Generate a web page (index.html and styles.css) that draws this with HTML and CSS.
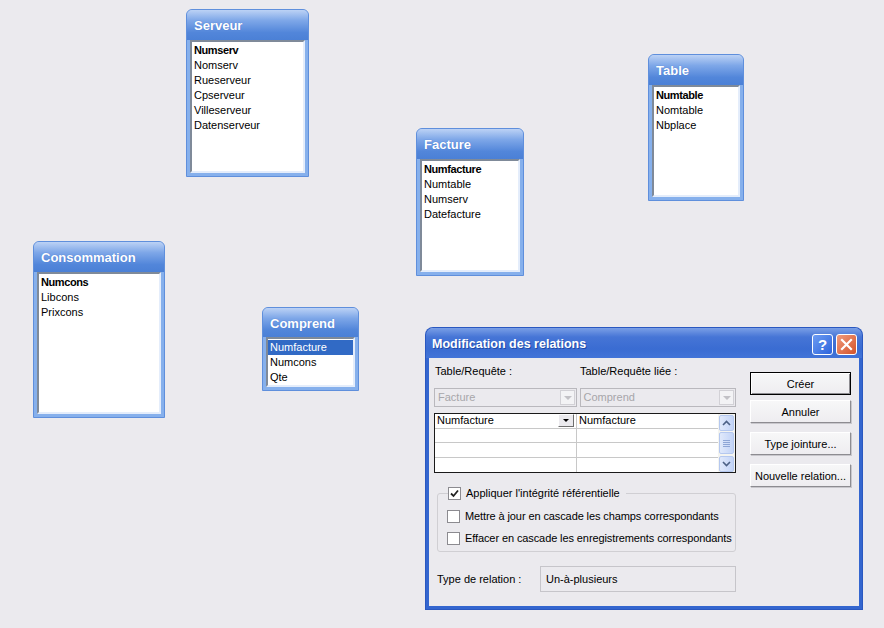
FILE: index.html
```html
<!DOCTYPE html>
<html lang="fr">
<head>
    <meta charset="UTF-8">
    <title>Relations</title>
    <link rel="stylesheet" href="styles.css">
</head>
<body>
    <div class="canvas">

        <div class="tbl tbl-serveur">
            <div class="tbl-title">Serveur</div>
            <ul class="tbl-list">
                <li class="key">Numserv</li>
                <li>Nomserv</li>
                <li>Rueserveur</li>
                <li>Cpserveur</li>
                <li>Villeserveur</li>
                <li>Datenserveur</li>
            </ul>
        </div>

        <div class="tbl tbl-table">
            <div class="tbl-title">Table</div>
            <ul class="tbl-list">
                <li class="key">Numtable</li>
                <li>Nomtable</li>
                <li>Nbplace</li>
            </ul>
        </div>

        <div class="tbl tbl-facture">
            <div class="tbl-title">Facture</div>
            <ul class="tbl-list">
                <li class="key">Numfacture</li>
                <li>Numtable</li>
                <li>Numserv</li>
                <li>Datefacture</li>
            </ul>
        </div>

        <div class="tbl tbl-conso">
            <div class="tbl-title">Consommation</div>
            <ul class="tbl-list">
                <li class="key">Numcons</li>
                <li>Libcons</li>
                <li>Prixcons</li>
            </ul>
        </div>

        <div class="tbl tbl-comprend">
            <div class="tbl-title">Comprend</div>
            <ul class="tbl-list">
                <li class="selected">Numfacture</li>
                <li>Numcons</li>
                <li>Qte</li>
            </ul>
        </div>

        <div class="dialog">
            <div class="dlg-title">
                <span class="dlg-caption">Modification des relations</span>
                <span class="cap-btn help">?</span>
                <span class="cap-btn close">
                    <svg width="13" height="13" viewBox="0 0 13 13"><path d="M2 2 L11 11 M11 2 L2 11" stroke="#fff" stroke-width="2.2" stroke-linecap="square"/></svg>
                </span>
            </div>
            <div class="dlg-body">
                <div class="dlg-main">
                    <div class="labels">
                        <span>Table/Requête :</span>
                        <span>Table/Requête liée :</span>
                    </div>
                    <div class="combos">
                        <div class="combo combo-left">Facture<span class="drop"><i></i></span></div>
                        <div class="combo combo-right">Comprend<span class="drop"><i></i></span></div>
                    </div>
                    <div class="grid">
                        <div class="grid-cells">
                            <div class="row">
                                <div class="cell cell-edit">Numfacture<span class="mini-drop"><i></i></span></div>
                                <div class="cell">Numfacture</div>
                            </div>
                            <div class="row"><div class="cell"></div><div class="cell"></div></div>
                            <div class="row"><div class="cell"></div><div class="cell"></div></div>
                            <div class="row"><div class="cell"></div><div class="cell"></div></div>
                        </div>
                        <div class="vscroll">
                            <span class="sb-btn">
                                <svg width="9" height="6" viewBox="0 0 9 6"><path d="M1 5 L4.5 1.5 L8 5" fill="none" stroke="#4d6185" stroke-width="1.6"/></svg>
                            </span>
                            <span class="sb-thumb"><i></i><i></i><i></i><i></i></span>
                            <span class="sb-btn">
                                <svg width="9" height="6" viewBox="0 0 9 6"><path d="M1 1 L4.5 4.5 L8 1" fill="none" stroke="#4d6185" stroke-width="1.6"/></svg>
                            </span>
                        </div>
                    </div>

                    <fieldset class="group">
                        <legend><span class="check checked"><svg width="9" height="9" viewBox="0 0 9 9"><path d="M1 4.5 L3.5 7 L8 1.5" fill="none" stroke="#222" stroke-width="1.8"/></svg></span>Appliquer l'intégrité référentielle</legend>
                        <label class="opt"><span class="check"></span>Mettre à jour en cascade les champs correspondants</label>
                        <label class="opt"><span class="check"></span>Effacer en cascade les enregistrements correspondants</label>
                    </fieldset>

                    <div class="reltype">
                        <span>Type de relation :</span>
                        <div class="reltype-box">Un-à-plusieurs</div>
                    </div>
                </div>

                <div class="dlg-buttons">
                    <button class="btn btn-default">Créer</button>
                    <button class="btn">Annuler</button>
                    <button class="btn btn-gap">Type jointure...</button>
                    <button class="btn btn-gap">Nouvelle relation...</button>
                </div>
            </div>
        </div>

    </div>
</body>
</html>
```

FILE: styles.css
```css
* {
    box-sizing: border-box;
}

body {
    margin: 0;
    background-color: #ebeaee;
    font-family: "Liberation Sans", Arial, sans-serif;
    font-size: 11px;
    color: #000;
}

.canvas {
    position: relative;
    width: 884px;
    height: 628px;
    overflow: hidden;
}

/* table windows */
.tbl {
    position: absolute;
    display: flex;
    flex-direction: column;
    background: #86b0ec;
    border: 1px solid #5f8fdc;
    border-radius: 6px 6px 0 0;
    padding: 0 3px 3px;
}

.tbl-title {
    height: 30px;
    margin: 0 -3px;
    padding: 3px 0 0 7px;
    line-height: 26px;
    color: #fff;
    font-weight: bold;
    font-size: 13px;
    border-radius: 5px 5px 0 0;
    background: linear-gradient(#bcd2f5, #7ea7e8 35%, #5286da 75%, #4b80d6);
    text-shadow: 0 0 1px #3c6ec8;
}

.tbl-list {
    flex: 1;
    list-style: none;
    margin: 0;
    padding: 1px 0 0;
    background: #fff;
    border: 2px solid;
    border-color: #7f8a99 #e4edfb #e4edfb #7f8a99;
}

.tbl-list li {
    height: 15px;
    line-height: 15px;
    padding-left: 2px;
    white-space: nowrap;
}

.tbl-list .key {
    font-weight: bold;
    letter-spacing: -0.4px;
}

.tbl-list .selected {
    background: #316ac5;
    color: #fff;
}

.tbl-serveur { left: 186px; top: 9px; width: 123px; height: 168px; }
.tbl-table { left: 648px; top: 54px; width: 96px; height: 147px; }
.tbl-facture { left: 416px; top: 128px; width: 108px; height: 148px; }
.tbl-conso { left: 33px; top: 241px; width: 132px; height: 177px; }
.tbl-comprend { left: 262px; top: 307px; width: 97px; height: 84px; }

/* dialog */
.dialog {
    position: absolute;
    left: 426px;
    top: 328px;
    width: 436px;
    height: 281px;
    display: flex;
    flex-direction: column;
    background: #ebeaee;
    border: 3px solid #3466cf;
    border-top: none;
    border-radius: 7px 7px 0 0;
    box-shadow: 0 0 0 1px #2a58c0;
}

.dlg-title {
    display: flex;
    align-items: center;
    height: 30px;
    margin: 0 -3px;
    padding: 2px 5px 0 6px;
    border-radius: 7px 7px 0 0;
    background: linear-gradient(#7a9fe6, #4675d6 30%, #3a6cd2 70%, #4274d8);
}

.dlg-caption {
    flex: 1;
    color: #fff;
    font-weight: bold;
    font-size: 12.5px;
    text-shadow: 1px 1px 0 #1f4aa8;
}

.cap-btn {
    width: 21px;
    height: 21px;
    margin-left: 3px;
    display: flex;
    align-items: center;
    justify-content: center;
    border: 1px solid #fff;
    border-radius: 3px;
    color: #fff;
    font-weight: bold;
    font-size: 15px;
}

.help {
    background: linear-gradient(135deg, #6d9cf2, #2d64dc);
}

.close {
    background: linear-gradient(135deg, #f09b7c, #d4532a);
}

.dlg-body {
    flex: 1;
    display: flex;
    padding: 6px 0 0 5px;
}

.dlg-main {
    width: 302px;
}

.labels {
    display: grid;
    grid-template-columns: 145px 1fr;
    height: 14px;
    line-height: 14px;
    padding-left: 1px;
}

.combos {
    display: flex;
    gap: 3px;
    margin-top: 10px;
}

.combo {
    position: relative;
    height: 19px;
    line-height: 17px;
    padding-left: 3px;
    color: #a7a6aa;
    background: #ebeaee;
    border: 1px solid #b9b8bd;
}

.combo-left { width: 143px; }
.combo-right { width: 157px; }

.drop {
    position: absolute;
    right: 1px;
    top: 1px;
    width: 15px;
    height: 15px;
    background: #f3f3f5;
    border: 1px solid #d2d1d6;
}

.drop i,
.mini-drop i {
    position: absolute;
    left: 3px;
    top: 5px;
    border-left: 4px solid transparent;
    border-right: 4px solid transparent;
    border-top: 4px solid #c2c1c6;
}

.grid {
    display: flex;
    margin-top: 6px;
    height: 60px;
    background: #fff;
    border: 1px solid #1a1a1a;
}

.grid-cells {
    flex: 1;
}

.row {
    display: grid;
    grid-template-columns: 142px 1fr;
    height: 14.5px;
    border-bottom: 1px solid #c8c8c8;
}

.row:last-child {
    border-bottom: none;
}

.cell {
    position: relative;
    line-height: 13px;
    padding-left: 2px;
    border-right: 1px solid #c8c8c8;
}

.cell:last-child {
    border-right: none;
}

.mini-drop {
    position: absolute;
    right: 2px;
    top: 0;
    width: 16px;
    height: 13px;
    background: #ebeaee;
    border: 1px solid;
    border-color: #fff #6f6f6f #6f6f6f #fff;
}

.mini-drop i {
    left: 4px;
    top: 4px;
    border-left-width: 3px;
    border-right-width: 3px;
    border-top: 3px solid #000;
}

.vscroll {
    width: 17px;
    display: flex;
    flex-direction: column;
    background: #f4f4f0;
}

.sb-btn,
.sb-thumb {
    display: flex;
    align-items: center;
    justify-content: center;
    margin: 1px 1px 0;
    border: 1px solid #b5c8ef;
    border-radius: 2px;
    background: linear-gradient(90deg, #e0e9fb, #c3d4f7);
}

.sb-btn {
    height: 16px;
}

.sb-thumb {
    flex: 1;
    flex-direction: column;
    gap: 1px;
    margin-bottom: 1px;
}

.sb-thumb i {
    width: 7px;
    height: 1px;
    background: #8ea6d6;
}

.group {
    margin: 13px 0 0 3px;
    padding: 0 0 6px 9px;
    width: 299px;
    border: 1px solid #d0cfd3;
    border-radius: 3px;
}

.group legend {
    display: flex;
    align-items: center;
    margin-left: 1px;
    padding: 0 6px 0 0;
    height: 14px;
    line-height: 14px;
}

.check {
    flex: none;
    display: inline-flex;
    align-items: center;
    justify-content: center;
    width: 13px;
    height: 13px;
    margin-right: 5px;
    background: #fff;
    border: 1px solid #8c8b90;
}

.opt {
    display: flex;
    align-items: center;
    height: 14px;
    margin-top: 9px;
    white-space: nowrap;
    letter-spacing: -0.1px;
}

.opt + .opt {
    margin-top: 8px;
}

.reltype {
    display: flex;
    align-items: center;
    margin: 14px 0 0 3px;
}

.reltype span {
    width: 103px;
}

.reltype-box {
    width: 196px;
    height: 26px;
    line-height: 24px;
    padding-left: 5px;
    border: 1px solid #c6c5ca;
}

.dlg-buttons {
    display: flex;
    flex-direction: column;
    margin: 8px 0 0 14px;
}

.btn {
    width: 101px;
    height: 23px;
    margin-bottom: 5px;
    padding: 0;
    font: 11px "Liberation Sans", Arial, sans-serif;
    color: #000;
    background: linear-gradient(#f7f7f8, #eeedf0);
    border: 1px solid;
    border-color: #fff #8d8c91 #8d8c91 #fff;
    box-shadow: 1px 1px 0 #c8c7cc;
}

.btn-default {
    border: 1px solid #000;
    box-shadow: inset 1px 1px 0 #fff, inset -1px -1px 0 #8d8c91;
}

.btn-gap {
    margin-top: 4px;
}
```
